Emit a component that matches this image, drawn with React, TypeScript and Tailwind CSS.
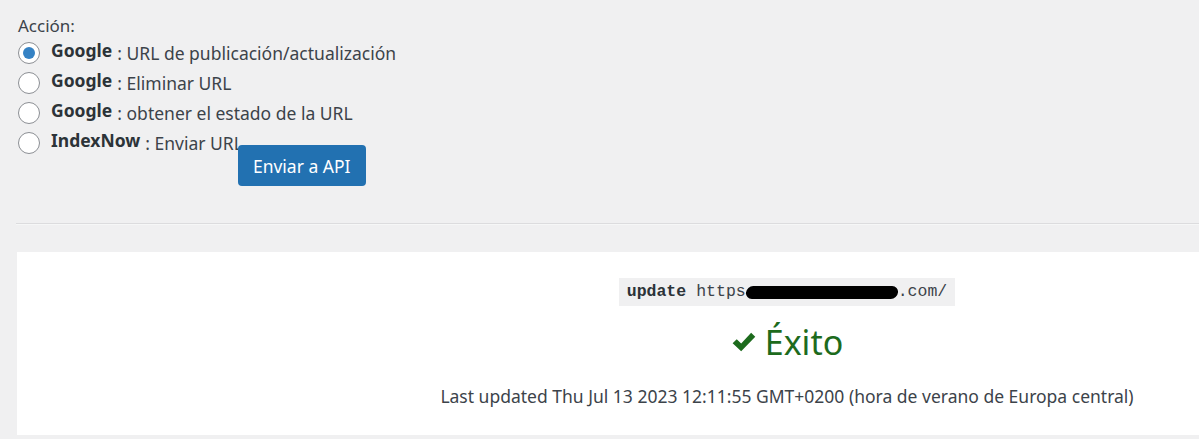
import { useState } from "react";

const options = [
  { id: "publish", provider: "Google", label: "URL de publicación/actualización" },
  { id: "delete", provider: "Google", label: "Eliminar URL" },
  { id: "status", provider: "Google", label: "obtener el estado de la URL" },
  { id: "indexnow", provider: "IndexNow", label: "Enviar URL" },
];

function Radio({ checked }: { checked: boolean }) {
  return (
    <span className="flex h-[22px] w-[22px] shrink-0 items-center justify-center rounded-full border border-[#8c8f94] bg-white">
      {checked && <span className="h-[12px] w-[12px] rounded-full bg-[#3582c4]" />}
    </span>
  );
}

export default function App() {
  const [action, setAction] = useState("publish");

  return (
    <div className="min-h-[439px] overflow-hidden bg-[#f0f0f1] text-[17.5px] leading-[24px] text-[#3c434a] [font-family:'Segoe_UI','Noto_Sans',sans-serif]">
      <div className="pl-[18px] pt-[14px]">
        <div className="text-[17px]">Acción:</div>
        <div className="flex flex-col">
          {options.map((opt) => (
            <div
              key={opt.id}
              className="flex cursor-pointer items-start"
              onClick={() => setAction(opt.id)}
            >
              <div className="flex h-[30px] items-center">
                <Radio checked={action === opt.id} />
                <span className="relative -top-[3px] ml-[11px] font-bold text-[#2c3338]">{opt.provider}</span>
                <span className="ml-[5px]">: {opt.label}</span>
              </div>
              {opt.id === "indexnow" && (
                <button className="-ml-[5px] mt-[17px] h-[41px] rounded-[4px] bg-[#2271b1] px-[15px] text-[17.5px] text-white">
                  Enviar a API
                </button>
              )}
            </div>
          ))}
        </div>
      </div>

      <div className="ml-[16px] mt-[37px] border-t border-b border-t-[#dcdcde] border-b-[#f6f7f7]" />

      <div className="ml-[17px] mt-[27px] h-[183px] w-[1540px] bg-white">
        <div className="flex flex-col items-center pt-[26px]">
          <code className="flex h-[28px] items-center bg-[#f0f0f1] px-[8px] text-[16.5px] text-[#3c434a] [font-family:'Liberation_Mono',monospace]">
            <b className="text-[#2c3338]">update</b>
            <span className="ml-[10px]">https</span>
            <span className="inline-block h-[13px] w-[152px] -skew-x-6 rounded-full bg-black" />
            <span>.com/</span>
          </code>
          <div className="mt-[16px] flex items-center text-[34px] leading-[40px] text-[#1d6b1d]">
            <svg viewBox="0 0 24 24" className="mr-[8px] h-[26px] w-[26px]" fill="#1d6b1d">
              <path d="M1.5 13.2 L5.3 9.4 L9.4 13.4 L18.6 3.4 L22.4 7.2 L9.4 20.6 Z" />
            </svg>
            <span>Éxito</span>
          </div>
          <div className="mt-[22px]">
            Last updated Thu Jul 13 2023 12:11:55 GMT+0200 (hora de verano de Europa central)
          </div>
        </div>
      </div>
    </div>
  );
}
